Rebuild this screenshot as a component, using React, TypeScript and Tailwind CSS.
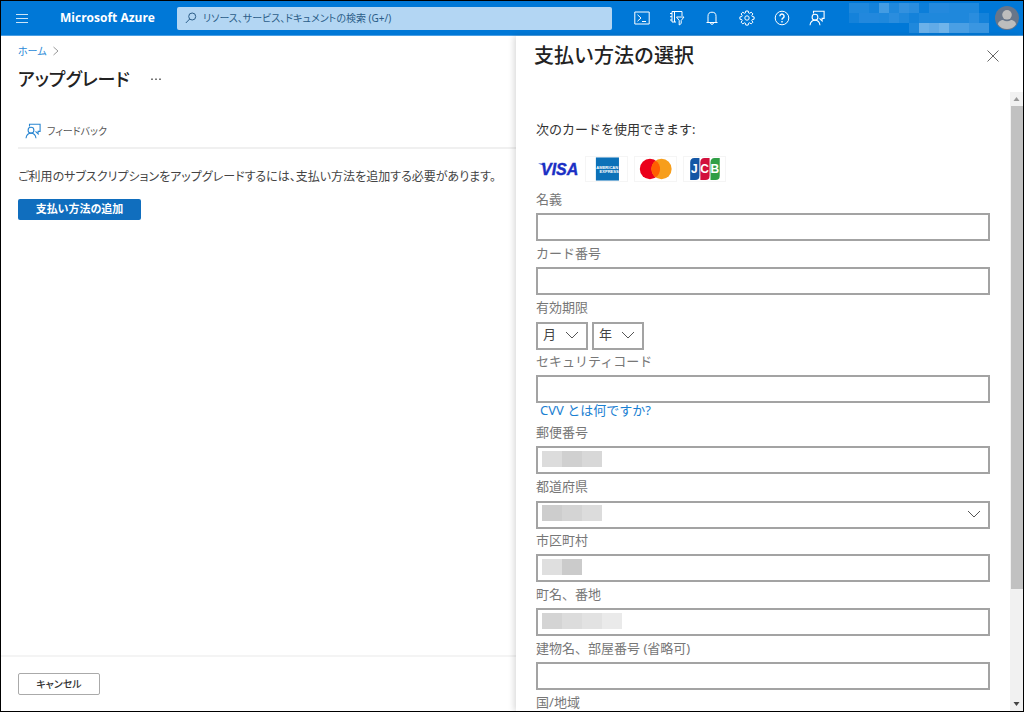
import { ReactNode } from 'react';

const MosaicRow = ({ colors, className }: { colors: string[]; className: string }) => (
  <span className="flex">
    {colors.map((c, i) => (
      <span key={i} className={`${className} ${c}`} />
    ))}
  </span>
);

const FeedbackIcon = ({ className }: { className: string }) => (
  <svg viewBox="0 0 16 16" fill="none" stroke="currentColor" strokeWidth="1.1" className={className}>
    <path d="M4.5 3.5V1.2h10.6v7.2h-2v2.600l-2.600-2.600" />
    <circle cx="6" cy="7.2" r="2.9" />
    <path d="M1 15.2c.4-3 2.4-5 5-5s4.6 2 5 5" />
  </svg>
);

const ChevronDown = () => (
  <svg viewBox="0 0 14 8" fill="none" stroke="#555" className="pointer-events-none absolute right-[9px] top-1/2 h-2 w-3.5 -translate-y-1/2">
    <path d="M1 1l6 6 6-6" />
  </svg>
);

const toolbarIcons: { name: string; icon: ReactNode }[] = [
  {
    name: 'Cloud Shell',
    icon: (
      <>
        <path d="M.8 2h14.4v12H.8z" />
        <path d="M3.5 4.8L7 8l-3.5 3.2M8 11.5h4" />
      </>
    ),
  },
  {
    name: 'ディレクトリとサブスクリプション',
    icon: (
      <>
        <path d="M7 12H3V1.5h10V6M5.5 1.5V12M1 3.5h2M1 6.7h2M1 10h2" />
        <path d="M7.5 7H15l-2.8 3.500v3l-2 1.500v-4.500z" />
      </>
    ),
  },
  {
    name: '通知',
    icon: (
      <>
        <path d="M2.5 12.5h11M4 12.5V6.2a4 4 0 0 1 8 0v6.300" />
        <path d="M6.5 12.8a1.500 1.500 0 0 0 3 0" />
      </>
    ),
  },
  {
    name: '設定',
    icon: (
      <>
        <circle cx="8" cy="8" r="2.2" />
        <path d="M6.8 1h2.400l.4 1.900 1 .4 1.600-1.100 1.700 1.700-1.100 1.600.4 1 1.900.4v2.300l-1.900.4-.4 1 1.100 1.600-1.700 1.700-1.600-1.100-1 .4-.4 1.900H6.800l-.4-1.900-1-.4-1.600 1.100-1.700-1.700 1.100-1.600-.4-1L.9 9.200V6.900l1.900-.4.4-1-1.100-1.600 1.700-1.700 1.600 1.100 1-.4z" />
      </>
    ),
  },
  {
    name: 'ヘルプ',
    icon: (
      <>
        <circle cx="8" cy="8" r="6.8" />
        <path d="M5.9 6.2a2.100 2.100 0 1 1 3.300 1.700c-.8.500-1.200.9-1.200 1.900M8 11v1.400" strokeWidth="1.4" />
      </>
    ),
  },
];

const accountMosaic = [
  ['bg-[#1f88dc]', 'bg-[#1f88dc]', 'bg-[#1482da]', 'bg-[#439ce3]', 'bg-[#1f88dc]', 'bg-[#3391df]', 'bg-[#2a8dde]', 'bg-[#0c7ed9]', 'bg-[#2489dd]', 'bg-[#2489dd]', 'bg-[#1f88dc]', 'bg-[#1f88dc]', 'bg-[#1f88dc]', 'bg-[#0078d7]'],
  ['bg-[#1482da]', 'bg-[#2288dd]', 'bg-[#2288dd]', 'bg-[#1f88dc]', 'bg-[#2a8dde]', 'bg-[#1f88dc]', 'bg-[#1482da]', 'bg-[#1f88dc]', 'bg-[#1f88dc]', 'bg-[#1f88dc]', 'bg-[#1f88dc]', 'bg-[#1f88dc]', 'bg-[#2a8dde]', 'bg-[#1482da]'],
  ['bg-[#0078d7]', 'bg-[#0078d7]', 'bg-[#0078d7]', 'bg-[#0078d7]', 'bg-[#0078d7]', 'bg-[#0078d7]', 'bg-[#1f88dc]', 'bg-[#6cb1e9]', 'bg-[#62abe7]', 'bg-[#70b4ea]', 'bg-[#4a9fe4]', 'bg-[#4a9fe4]', 'bg-[#3a96e1]', 'bg-[#3a96e1]'],
];

const Header = () => (
  <header className="flex h-[35px] shrink-0 items-center border-b border-[#4a9fe4] bg-[#0078d7] text-white">
    <button aria-label="メニュー" className="ml-[15px] w-3">
      <svg viewBox="0 0 12 10" stroke="#fff" strokeOpacity="0.8" className="h-2.5 w-3">
        <path d="M0 1.5h12M0 5.5h12M0 9.5h12" />
      </svg>
    </button>
    <a href="#" className="ml-8 w-[117px] shrink-0 whitespace-nowrap font-['Open_Sans','Noto_Sans',sans-serif] text-xs font-bold">
      Microsoft Azure
    </a>
    <label className="flex h-[23px] w-[435px] items-center rounded-xs bg-[#b3d6f3] pl-2">
      <svg viewBox="0 0 12 12" fill="none" stroke="#2b5d88" className="h-3 w-3 shrink-0">
        <circle cx="7.2" cy="4.5" r="3.5" />
        <path d="M4.7 7L.8 11" />
      </svg>
      <input
        type="search"
        aria-label="検索"
        placeholder="リソース、サービス、ドキュメントの検索 (G+/)"
        className="ml-1.5 min-w-0 flex-1 bg-transparent text-[10px] outline-none [font-feature-settings:'palt'] placeholder:text-[#2b5d88]"
      />
    </label>
    <nav className="ml-[22px] flex items-center gap-[19px]">
      {toolbarIcons.map(({ name, icon }) => (
        <button key={name} aria-label={name} className="h-4 w-4">
          <svg viewBox="0 0 16 16" fill="none" stroke="#fff" strokeWidth="1" className="h-4 w-4">
            {icon}
          </svg>
        </button>
      ))}
      <button aria-label="フィードバック">
        <FeedbackIcon className="h-4 w-4" />
      </button>
    </nav>
    <button aria-label="アカウント" className="ml-auto mr-1 flex items-center gap-1.5">
      <span className="block">
        <MosaicRow className="h-2.5 w-2.5" colors={accountMosaic[0]} />
        <MosaicRow className="h-2.5 w-2.5" colors={accountMosaic[1]} />
        <MosaicRow className="h-2.5 w-2.5" colors={accountMosaic[2]} />
      </span>
      <svg viewBox="0 0 24 24" className="h-6 w-6">
        <circle cx="12" cy="12" r="12" fill="#68768a" />
        <circle cx="12" cy="8.8" r="4.8" fill="#bdbdbd" />
        <path d="M3 18.5c0-3 3-4.500 5-4.500q4 2.500 8 0c2 0 5 1.500 5 4.500-2 3-5.500 4.500-9 4.500s-7-1.500-9-4.500z" fill="#bdbdbd" />
      </svg>
    </button>
  </header>
);

const Blade = () => (
  <main className="flex min-w-0 flex-1 flex-col [font-feature-settings:'palt']">
    <div className="px-[17px]">
      <nav className="mt-[7px] flex h-4 items-center gap-1.5 text-[10px]">
        <a href="#" className="text-[#2a8ad8]">ホーム</a>
        <svg viewBox="0 0 6 10" fill="none" stroke="#999" className="h-2.5 w-1.5">
          <path d="M.5 1l4.5 4-4.5 4" />
        </svg>
      </nav>
      <div className="mt-1 flex h-8 items-center gap-5">
        <h1 className="text-lg font-medium text-[#222]">アップグレード</h1>
        <button aria-label="その他" className="text-[#777]">
          <svg viewBox="0 0 12 4" fill="currentColor" className="h-1 w-3">
            <path d="M1 1.5h2v1.500H1zM5 1.5h2v1.500H5zM9 1.5h2v1.500H9z" />
          </svg>
        </button>
      </div>
    </div>
    <div className="ml-[17px] mt-[27px] border-b-2 border-[#f0f0f0] pb-[7px] pl-[7px]">
      <button className="flex h-[18px] items-center gap-1.5 text-[10px] text-[#555]">
        <FeedbackIcon className="h-4 w-4 text-[#2a86d1]" />
        フィードバック
      </button>
    </div>
    <div className="pl-[17px]">
      <p className="mt-[18px] whitespace-nowrap text-xs leading-5 text-[#444]">
        ご利用のサブスクリプションをアップグレードするには、支払い方法を追加する必要があります。
      </p>
      <button className="mt-3 h-[21px] w-[123px] rounded-xs bg-[#106ebe] text-[11px] font-bold text-white">
        支払い方法の追加
      </button>
    </div>
    <footer className="mt-auto border-t-2 border-[#f4f4f4] px-[17px] pb-4 pt-4">
      <button className="flex h-[22px] w-[82px] items-center justify-center rounded-xs border border-[#aaa] text-[10px] font-medium text-[#333]">
        キャンセル
      </button>
    </footer>
  </main>
);

const labelClass = 'flex h-[26px] items-center pb-[3px] text-[13px] leading-5 text-[#777]';

const fieldClass =
  'h-7 w-full appearance-none border-2 border-[#a3a3a3] bg-white px-[5px] pb-0.5 text-[13px] text-[#444] outline-none focus:border-[#106ebe]';

interface FieldProps {
  id: string;
  label: string;
  select?: boolean;
  mosaic?: string[];
}

const Field = ({ id, label, select, mosaic }: FieldProps) => (
  <div>
    <label htmlFor={id} className={labelClass}>
      {label}
    </label>
    <div className="relative h-7">
      {select ? (
        <>
          <select id={id} className={fieldClass}>
            <option />
          </select>
          <ChevronDown />
        </>
      ) : (
        <input id={id} className={fieldClass} />
      )}
      {mosaic && (
        <span className="absolute left-1.5 top-[5px]">
          <MosaicRow className="h-4 w-5" colors={mosaic} />
        </span>
      )}
    </div>
  </div>
);

const CardLogos = () => (
  <div className="flex h-[26px] items-center gap-1.5">
    <svg viewBox="0 0 43 26" className="h-[26px] w-[43px]" role="img" aria-label="VISA">
      <text x="5" y="19" fill="#1a2fc4" stroke="#1a2fc4" strokeWidth="0.4" fontFamily="Liberation Sans" fontWeight="700" fontStyle="italic" fontSize="16">VISA</text>
      <path d="M2.5 7.5H8l1.500 4Q7 8.500 2.500 7.800z" fill="#1a2fc4" />
    </svg>
    <svg viewBox="0 0 43 26" className="h-[26px] w-[43px] border border-[#f5f5f5]" role="img" aria-label="American Express">
      <path d="M10 .5h25v25H10z" fill="#0c71b8" />
      <text x="10.5" y="12.5" fill="#fff" fontFamily="Liberation Sans" fontWeight="700" fontSize="4.4">AMERICAN</text>
      <text x="14" y="17.5" fill="#fff" fontFamily="Liberation Sans" fontWeight="700" fontSize="4.4">EXPRESS</text>
    </svg>
    <svg viewBox="0 0 43 26" className="h-[26px] w-[43px] border border-[#f5f5f5]" role="img" aria-label="Mastercard">
      <circle cx="15.5" cy="13" r="11" fill="#eb001b" />
      <circle cx="28" cy="13" r="11" fill="#f79e1b" />
      <path d="M21.75 4a11 11 0 0 1 0 18 11 11 0 0 1 0-18z" fill="#ff5f00" />
    </svg>
    <svg viewBox="0 0 43 26" className="h-[26px] w-[43px] border border-[#f5f5f5]" role="img" aria-label="JCB">
      <path d="M10.5 1H16v19q0 5-4.500 5H6V6q0-5 4.500-5z" fill="#1456a5" />
      <path d="M21.5 1H27v19q0 5-4.500 5H17V6q0-5 4.500-5z" fill="#d2103c" />
      <path d="M32.5 1H38v19q0 5-4.500 5H28V6q0-5 4.500-5z" fill="#2f9e45" />
      <text x="7" y="17.5" fill="#fff" fontFamily="Liberation Sans" fontWeight="700" fontSize="13">J</text>
      <text x="17" y="17.5" fill="#fff" fontFamily="Liberation Sans" fontWeight="700" fontSize="13">C</text>
      <text x="28" y="17.5" fill="#fff" fontFamily="Liberation Sans" fontWeight="700" fontSize="13">B</text>
    </svg>
  </div>
);

const DateSelect = ({ label, text }: { label: string; text: string }) => (
  <div className="relative h-7 w-[52px]">
    <select aria-label={label} className={fieldClass}>
      <option>{text}</option>
    </select>
    <ChevronDown />
  </div>
);

const PaymentPanel = () => (
  <aside className="flex w-[49.6%] shrink-0 flex-col bg-white shadow-[-2px_0_6px_rgba(0,0,0,0.15)]">
    <div className="flex h-14 shrink-0 items-start justify-between pl-[18px] pr-6 pt-1.5">
      <h2 className="text-xl font-medium text-[#222]">支払い方法の選択</h2>
      <button aria-label="閉じる" className="mt-2">
        <svg viewBox="0 0 12 12" stroke="#666" className="h-3 w-3">
          <path d="M.5.5l11 11M11.5.5l-11 11" />
        </svg>
      </button>
    </div>
    <div className="flex min-h-0 flex-1">
      <form className="min-w-0 flex-1 overflow-y-auto pl-5 pr-5 pt-[27px] [scrollbar-width:none]">
        <p className="h-5 text-[13px] leading-5 text-[#333]">次のカードを使用できます:</p>
        <div className="mb-[5px] mt-[17px]">
          <CardLogos />
        </div>
        <Field id="name" label="名義" />
        <Field id="card" label="カード番号" />
        <fieldset>
          <legend className={labelClass}>有効期限</legend>
          <div className="flex gap-1">
            <DateSelect label="有効期限の月" text="月" />
            <DateSelect label="有効期限の年" text="年" />
          </div>
        </fieldset>
        <Field id="cvv" label="セキュリティコード" />
        <a href="#" className="flex h-[17px] items-center pb-[3px] pl-1 text-[13px] leading-4 text-[#1a80d2]">
          CVV とは何ですか?
        </a>
        <Field id="zip" label="郵便番号" mosaic={['bg-[#dcdcdc]', 'bg-[#d0d0d0]', 'bg-[#d8d8d8]']} />
        <Field id="pref" label="都道府県" select mosaic={['bg-[#cdcdcd]', 'bg-[#d4d4d4]', 'bg-[#dcdcdc]']} />
        <Field id="city" label="市区町村" mosaic={['bg-[#dfdfdf]', 'bg-[#cbcbcb]']} />
        <Field id="street" label="町名、番地" mosaic={['bg-[#d4d4d4]', 'bg-[#dcdcdc]', 'bg-[#e2e2e2]', 'bg-[#eaeaea]']} />
        <Field id="building" label="建物名、部屋番号 (省略可)" />
        <Field id="country" label="国/地域" select />
      </form>
      <div className="flex w-[13px] shrink-0 flex-col items-center bg-[#f1f1f1]">
        <svg viewBox="0 0 13 14" className="h-3.5 w-[13px] shrink-0">
          <path d="M3.5 9h6l-3-4z" fill="#999" />
        </svg>
        <div className="h-[78%] w-3 bg-[#c1c1c1]" />
        <svg viewBox="0 0 13 14" className="mt-auto h-3.5 w-[13px] shrink-0">
          <path d="M3.5 5h6l-3 4z" fill="#444" />
        </svg>
      </div>
    </div>
  </aside>
);

const App = () => (
  <div className="flex h-screen flex-col overflow-hidden border border-black bg-white font-['Noto_Sans','Noto_Sans_CJK_JP',sans-serif]">
    <Header />
    <div className="flex min-h-0 flex-1">
      <Blade />
      <PaymentPanel />
    </div>
  </div>
);

export default App;
